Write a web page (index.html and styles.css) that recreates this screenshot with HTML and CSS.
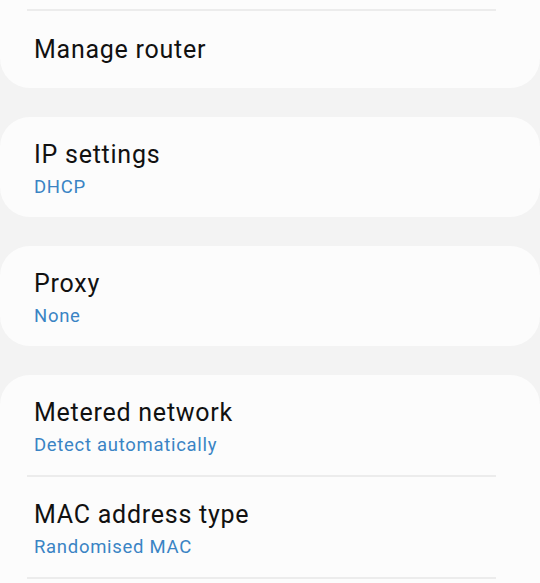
FILE: index.html
```html
<!DOCTYPE html>
<html>

<head>
    <meta name="viewport" content="width=device-width, initial-scale=1">
    <title>Wi-Fi network settings</title>
    <link rel="stylesheet" href="styles.css">
</head>

<body>
    <div class="list">
        <div class="card card-cont">
            <div class="divider"></div>
            <div class="row row-single">
                <div class="title">Manage router</div>
            </div>
        </div>

        <div class="card">
            <div class="row">
                <div class="title">IP settings</div>
                <div class="value">DHCP</div>
            </div>
        </div>

        <div class="card">
            <div class="row">
                <div class="title">Proxy</div>
                <div class="value">None</div>
            </div>
        </div>

        <div class="card">
            <div class="row">
                <div class="title">Metered network</div>
                <div class="value">Detect automatically</div>
            </div>
            <div class="divider"></div>
            <div class="row">
                <div class="title">MAC address type</div>
                <div class="value">Randomised MAC</div>
            </div>
            <div class="divider"></div>
            <div class="row-spacer"></div>
        </div>
    </div>
</body>

</html>
```

FILE: styles.css
```css
body {
    font-family: Roboto, "Noto Sans", sans-serif;
    margin: 0;
    padding: 0;
    background-color: #f3f3f3;
    overflow: hidden;
}

.list {
    display: flex;
    flex-direction: column;
    gap: 29px;
}

.card {
    background-color: #fcfcfc;
    border-radius: 30px;
}

.card-cont {
    border-top-left-radius: 0;
    border-top-right-radius: 0;
    padding-top: 9px;
}

.divider {
    height: 2px;
    margin: 0 44px 0 27px;
    background-color: #ececec;
}

.row {
    padding: 23px 34px 19px;
}

.row-single {
    padding: 24px 34px 23px;
}

.row-spacer {
    height: 60px;
}

.title {
    font-size: 25px;
    line-height: 30px;
    color: #111111;
    letter-spacing: 0.75px;
}

.value {
    margin-top: 6px;
    font-size: 18.5px;
    line-height: 22px;
    color: #3a84c4;
    letter-spacing: 0.7px;
}
```
